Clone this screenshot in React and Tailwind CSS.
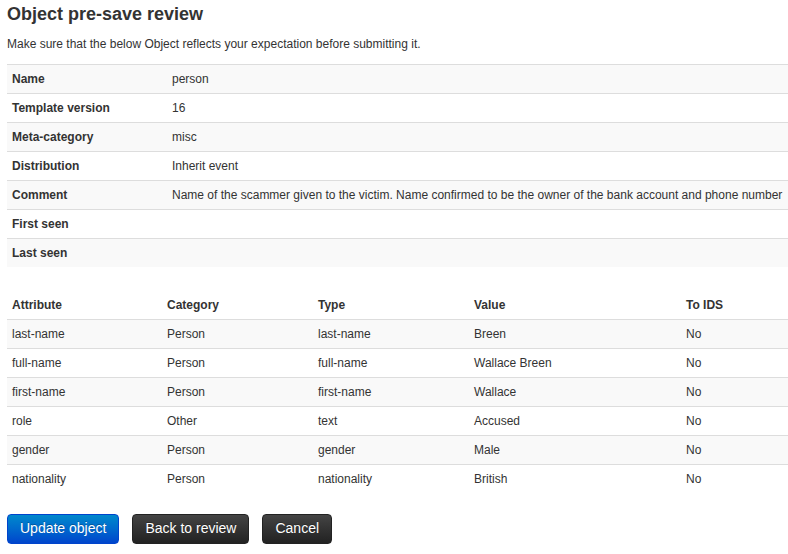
export default function App() {
  const info = [
    ["Name", "person"],
    ["Template version", "16"],
    ["Meta-category", "misc"],
    ["Distribution", "Inherit event"],
    ["Comment", "Name of the scammer given to the victim. Name confirmed to be the owner of the bank account and phone number"],
    ["First seen", ""],
    ["Last seen", ""],
  ];
  const attrs = [
    ["last-name", "Person", "last-name", "Breen", "No"],
    ["full-name", "Person", "full-name", "Wallace Breen", "No"],
    ["first-name", "Person", "first-name", "Wallace", "No"],
    ["role", "Other", "text", "Accused", "No"],
    ["gender", "Person", "gender", "Male", "No"],
    ["nationality", "Person", "nationality", "British", "No"],
  ];
  return (
    <div className="pl-[7px] text-[12px] leading-[20px] text-[#333] bg-white min-h-[554px]" style={{ fontFamily: '"Liberation Sans", Arial, sans-serif' }}>
      <h3 className="text-[18px] leading-[28px] font-bold m-0">Object pre-save review</h3>
      <p className="mt-[6px] mb-[10px]">Make sure that the below Object reflects your expectation before submitting it.</p>
      <table className="w-[781px] border-collapse">
        <tbody>
          {info.map(([k, v], i) => (
            <tr key={k} className={i % 2 === 0 ? "bg-[#f9f9f9]" : ""}>
              <td className="w-[160px] px-[5px] py-[4px] border-t border-[#ddd] font-bold align-top whitespace-nowrap">{k}</td>
              <td className="px-[5px] py-[4px] border-t border-[#ddd] align-top whitespace-nowrap">{v || "\u00a0"}</td>
            </tr>
          ))}
        </tbody>
      </table>
      <table className="w-[781px] border-collapse mt-[24px]">
        <thead>
          <tr>
            <th className="w-[155px] text-left px-[5px] py-[4px] font-bold">Attribute</th>
            <th className="w-[151px] text-left px-[5px] py-[4px] font-bold">Category</th>
            <th className="w-[156px] text-left px-[5px] py-[4px] font-bold">Type</th>
            <th className="w-[212px] text-left px-[5px] py-[4px] font-bold">Value</th>
            <th className="text-left px-[5px] py-[4px] font-bold">To IDS</th>
          </tr>
        </thead>
        <tbody>
          {attrs.map((r, i) => (
            <tr key={r[0]} className={i % 2 === 0 ? "bg-[#f9f9f9]" : ""}>
              {r.map((c, j) => (
                <td key={j} className="px-[5px] py-[4px] border-t border-[#ddd]">{c}</td>
              ))}
            </tr>
          ))}
        </tbody>
      </table>
      <div className="flex gap-[13px] mt-[21px]">
        <button className="h-[30px] px-[12px] py-0 text-[14px] leading-[18px] pb-[2px] text-white rounded-[4px] border border-[#0044cc] bg-gradient-to-b from-[#0088cc] to-[#0044cc] [text-shadow:0_-1px_0_rgba(0,0,0,0.25)]">Update object</button>
        <button className="h-[30px] px-[12px] py-0 text-[14px] leading-[18px] pb-[2px] text-white rounded-[4px] border border-[#222] bg-gradient-to-b from-[#444444] to-[#222222] [text-shadow:0_-1px_0_rgba(0,0,0,0.25)]">Back to review</button>
        <button className="h-[30px] px-[12px] py-0 text-[14px] leading-[18px] pb-[2px] text-white rounded-[4px] border border-[#222] bg-gradient-to-b from-[#444444] to-[#222222] [text-shadow:0_-1px_0_rgba(0,0,0,0.25)]">Cancel</button>
      </div>
    </div>
  );
}
